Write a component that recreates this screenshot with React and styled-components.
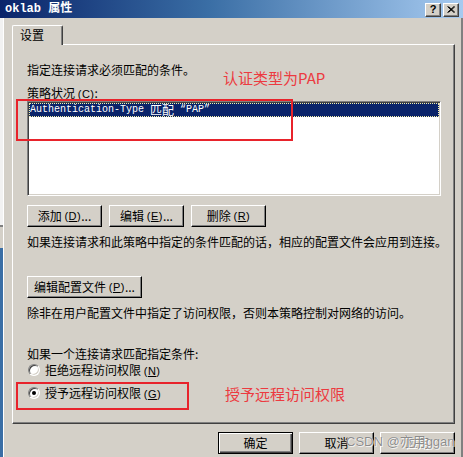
import React from "react";
import styled, { createGlobalStyle } from "styled-components";

const GlobalStyle = createGlobalStyle`
  html, body {
    margin: 0;
    padding: 0;
    background: #d4d0c8;
  }
  body {
    font-family: "Noto Sans CJK SC", "Liberation Sans", sans-serif;
    font-size: 12px;
  }
`;

const Frame = styled.div`
  position: relative;
  width: 463px;
  height: 457px;
  overflow: hidden;
  background: #d4d0c8;
  display: flex;
  flex-direction: column;
  color: #000;
`;

const TitleBar = styled.div`
  height: 18px;
  flex: none;
  display: flex;
  align-items: center;
  justify-content: space-between;
  padding: 0 4px 0 5px;
  background: linear-gradient(to right, #0a246a 0%, #3a6ea5 45%, #a6caf0 100%);
`;

const Title = styled.div`
  font-family: "Liberation Mono", "Noto Sans CJK SC", monospace;
  font-weight: bold;
  font-size: 12px;
  line-height: 14px;
  color: #fff;
  white-space: pre;
`;

const CaptionButtons = styled.div`
  display: flex;
  gap: 2px;
  margin-top: 1px;
`;

const CaptionButton = styled.div`
  width: 16px;
  height: 14px;
  box-sizing: border-box;
  background: #d4d0c8;
  border-top: 1px solid #fff;
  border-left: 1px solid #fff;
  border-right: 1px solid #404040;
  border-bottom: 1px solid #404040;
  box-shadow: inset -1px -1px #808080;
  display: flex;
  align-items: center;
  justify-content: center;
  font-family: "Liberation Sans", sans-serif;
  font-weight: bold;
  font-size: 11px;
  line-height: 11px;
`;

const Body = styled.div`
  flex: 1;
  display: flex;
  border-right: 2px solid #808080;
`;

const Edge = styled.div`
  width: 3px;
  flex: none;
  background: linear-gradient(
    to bottom,
    #f2f2f2 0,
    #f2f2f2 207px,
    #808080 207px,
    #808080 209px,
    #d4d0c8 209px,
    #d4d0c8 230px,
    #3a6ea5 230px
  );
`;

const Main = styled.div`
  flex: 1;
  border-left: 1px solid #fff;
  padding: 7px 6px 0 8px;
  display: flex;
  flex-direction: column;
`;

const TabStrip = styled.div`
  display: flex;
  position: relative;
  z-index: 1;
  margin-bottom: -1px;
`;

const Tab = styled.div`
  width: 51px;
  height: 20px;
  box-sizing: border-box;
  background: #d4d0c8;
  border-top: 1px solid #fff;
  border-left: 1px solid #fff;
  border-right: 1px solid #404040;
  border-radius: 2px 2px 0 0;
  box-shadow: inset -1px 0 #808080;
  padding: 2px 0 0 7px;
  line-height: 14px;
  font-size: 12px;
`;

const Panel = styled.div`
  height: 380px;
  box-sizing: border-box;
  border-top: 1px solid #fff;
  border-left: 1px solid #fff;
  border-right: 1px solid #404040;
  border-bottom: 1px solid #404040;
  box-shadow: inset -1px -1px #808080;
  padding: 18px 0 0 14px;
  display: flex;
  flex-direction: column;
  align-items: flex-start;
`;

const Line = styled.div`
  line-height: 14px;
  height: 14px;
  font-size: 12px;
  white-space: nowrap;
  margin-top: ${(p) => p.$gap || 0}px;
`;

const ListBox = styled.div`
  width: 414px;
  height: 95px;
  box-sizing: border-box;
  margin-top: 1px;
  background: #fff;
  border-top: 1px solid #808080;
  border-left: 1px solid #808080;
  border-right: 1px solid #fff;
  border-bottom: 1px solid #fff;
  box-shadow: inset 1px 1px #404040, inset -1px -1px #d4d0c8;
  padding: 1px 1px 0 1px;
`;

const ListRow = styled.div`
  height: 14px;
  box-sizing: border-box;
  background: #0a246a;
  border: 1px dotted #f6f0a8;
  color: #fff;
  font-family: "Liberation Mono", monospace;
  font-size: 10px;
  line-height: 12px;
  white-space: pre;
  display: flex;
  align-items: center;
`;

const Cjk = styled.span`
  font-family: "Noto Sans CJK SC", sans-serif;
  font-size: 12px;
  line-height: 12px;
`;

const ButtonRow = styled.div`
  display: flex;
  gap: ${(p) => p.$gap || 7}px;
  margin-top: ${(p) => p.$top || 0}px;
`;

const Button = styled.div`
  width: ${(p) => p.$width || 75}px;
  height: 22px;
  box-sizing: border-box;
  background: #d4d0c8;
  border-top: 1px solid ${(p) => (p.$default ? "#000" : "#fff")};
  border-left: 1px solid ${(p) => (p.$default ? "#000" : "#fff")};
  border-right: 1px solid #000;
  border-bottom: 1px solid #000;
  box-shadow: ${(p) =>
    p.$default
      ? "inset 1px 1px #fff, inset -1px -1px #404040, inset -2px -2px #808080"
      : "inset -1px -1px #808080"};
  display: flex;
  align-items: center;
  justify-content: center;
  font-size: 12px;
  line-height: 14px;
  white-space: pre;
  color: ${(p) => (p.$disabled ? "#808080" : "#000")};
  text-shadow: ${(p) => (p.$disabled ? "1px 1px #fff" : "none")};

  u {
    text-decoration: underline;
    text-underline-offset: 1px;
  }
`;

const Mn = styled.span`
  font-family: "Liberation Sans", sans-serif;
  font-size: 11px;
  letter-spacing: 0.5px;
`;

const RadioRow = styled.div`
  display: flex;
  align-items: center;
  height: 14px;
  margin-top: ${(p) => p.$gap || 0}px;
  margin-left: 1px;
  gap: 5px;
  white-space: nowrap;
  line-height: 14px;
`;

const RadioCircle = styled.div`
  width: 12px;
  height: 12px;
  box-sizing: border-box;
  border-radius: 50%;
  background: #fff;
  border-top: 1px solid #808080;
  border-left: 1px solid #808080;
  border-right: 1px solid #fff;
  border-bottom: 1px solid #fff;
  box-shadow: inset 1px 1px #404040, inset -1px -1px #d4d0c8;
  display: flex;
  align-items: center;
  justify-content: center;

  &::after {
    content: "";
    width: 4px;
    height: 4px;
    border-radius: 50%;
    background: #000;
    display: ${(p) => (p.$checked ? "block" : "none")};
  }
`;

const Footer = styled.div`
  display: flex;
  justify-content: flex-end;
  gap: 6px;
  margin-top: 8px;
`;

/* red annotations drawn on top of the screenshot */
const MarkBox = styled.div`
  position: absolute;
  left: ${(p) => p.$x}px;
  top: ${(p) => p.$y}px;
  width: ${(p) => p.$w}px;
  height: ${(p) => p.$h}px;
  box-sizing: border-box;
  border: 2px solid #e8232b;
  pointer-events: none;
`;

const MarkText = styled.div`
  position: absolute;
  left: ${(p) => p.$x}px;
  top: ${(p) => p.$y}px;
  color: #ec3a40;
  font-family: "Noto Sans CJK SC", sans-serif;
  font-size: 15px;
  line-height: 16px;
  white-space: nowrap;
`;

const Watermark = styled.div`
  position: absolute;
  left: 346px;
  top: 434px;
  font-family: "Liberation Sans", "Noto Sans CJK SC", sans-serif;
  font-size: 13px;
  line-height: 16px;
  color: rgba(120, 120, 120, 0.85);
  text-shadow: 0 0 1px #fff, 1px 1px 0 rgba(255, 255, 255, 0.7);
  white-space: nowrap;
  pointer-events: none;
`;

const CloseGlyph = () => (
  <svg width="8" height="7" viewBox="0 0 8 7">
    <path d="M0.5 0.5 L7 6.5 M1.5 0.5 L8 6.5 M7 0.5 L0.5 6.5 M8 0.5 L1.5 6.5" stroke="#000" strokeWidth="1" />
  </svg>
);

const Key = ({ k }) => (
  <Mn>
    (<u>{k}</u>)
  </Mn>
);

export default function App() {
  return (
    <>
      <GlobalStyle />
      <Frame>
        <TitleBar>
          <Title>oklab 属性</Title>
          <CaptionButtons>
            <CaptionButton>?</CaptionButton>
            <CaptionButton>
              <CloseGlyph />
            </CaptionButton>
          </CaptionButtons>
        </TitleBar>
        <Body>
          <Edge />
          <Main>
            <TabStrip>
              <Tab>设置</Tab>
            </TabStrip>
            <Panel>
              <Line>指定连接请求必须匹配的条件。</Line>
              <Line $gap={9}>
                策略状况 <Key k="C" />:
              </Line>
              <ListBox>
                <ListRow>
                  Authentication-Type <Cjk>匹配</Cjk> “PAP”
                </ListRow>
              </ListBox>
              <ButtonRow $top={9} $gap={7}>
                <Button>
                  添加 <Key k="D" />...
                </Button>
                <Button>
                  编辑 <Key k="E" />...
                </Button>
                <Button>
                  删除 <Key k="R" />
                </Button>
              </ButtonRow>
              <Line $gap={8}>
                如果连接请求和此策略中指定的条件匹配的话，相应的配置文件会应用到连接。
              </Line>
              <ButtonRow $top={27}>
                <Button $width={115}>
                  编辑配置文件 <Key k="P" />...
                </Button>
              </ButtonRow>
              <Line $gap={8}>
                除非在用户配置文件中指定了访问权限，否则本策略控制对网络的访问。
              </Line>
              <Line $gap={27}>如果一个连接请求匹配指定条件:</Line>
              <RadioRow $gap={2}>
                <RadioCircle />
                <span>
                  拒绝远程访问权限 <Key k="N" />
                </span>
              </RadioRow>
              <RadioRow $gap={9}>
                <RadioCircle $checked />
                <span>
                  授予远程访问权限 <Key k="G" />
                </span>
              </RadioRow>
            </Panel>
            <Footer>
              <Button $default>确定</Button>
              <Button>取消</Button>
              <Button $disabled>应用</Button>
            </Footer>
          </Main>
        </Body>

        <MarkBox $x={16} $y={99} $w={277} $h={42} />
        <MarkText $x={223} $y={70}>认证类型为PAP</MarkText>
        <MarkBox $x={16} $y={382} $w={173} $h={28} />
        <MarkText $x={225} $y={386}>授予远程访问权限</MarkText>
        <Watermark>CSDN @亦用ggan</Watermark>
      </Frame>
    </>
  );
}
